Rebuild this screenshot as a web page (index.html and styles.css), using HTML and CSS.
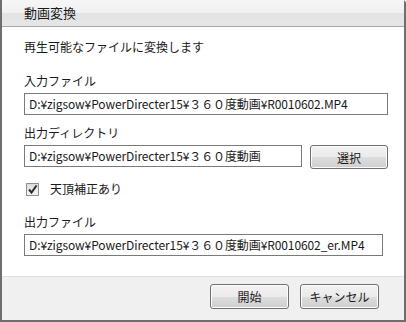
FILE: index.html
```html
<!DOCTYPE html>
<html lang="ja">
<head>
  <meta charset="UTF-8">
  <title>動画変換</title>
  <link rel="stylesheet" href="styles.css">
</head>
<body>
  <div class="dialog">
    <div class="titlebar">動画変換</div>

    <div class="content">
      <p class="lead">再生可能なファイルに変換します</p>

      <label class="field-label">入力ファイル</label>
      <div class="textbox wide">D:¥zigsow¥PowerDirecter15¥３６０度動画¥R0010602.MP4</div>

      <label class="field-label">出力ディレクトリ</label>
      <div class="row">
        <div class="textbox dir">D:¥zigsow¥PowerDirecter15¥３６０度動画</div>
        <button class="btn select">選択</button>
      </div>

      <div class="check">
        <span class="box">
          <svg width="11" height="11" viewBox="0 0 11 11">
            <path d="M2 5.5 L4.5 8.5 L9.5 1.5" fill="none" stroke="#2b2b2b" stroke-width="2"/>
          </svg>
        </span>
        <span>天頂補正あり</span>
      </div>

      <label class="field-label out">出力ファイル</label>
      <div class="textbox out-file">D:¥zigsow¥PowerDirecter15¥３６０度動画¥R0010602_er.MP4</div>
    </div>

    <div class="footer">
      <button class="btn">開始</button>
      <button class="btn">キャンセル</button>
    </div>
  </div>
</body>
</html>
```

FILE: styles.css
```css
body {
  margin: 0;
  width: 406px;
  height: 322px;
  overflow: hidden;
  font-family: "Noto Sans CJK JP", "Noto Sans", sans-serif;
  font-size: 12px;
  color: #1a1a1a;
  background: #ffffff;
}

.dialog {
  box-sizing: border-box;
  width: 406px;
  height: 322px;
  display: flex;
  flex-direction: column;
  border: 2px solid #6e6e6e;
  border-top: none;
  border-top-right-radius: 4px;
  background: #ffffff;
}

.titlebar {
  height: 26px;
  line-height: 26px;
  padding-left: 22px;
  font-size: 13px;
  background: linear-gradient(#f6f6f6, #f0f0f0 50%, #e3e3e3 51%, #e6e6e6);
  border-bottom: 1px solid #a9a9a9;
}

.content {
  flex: 1;
  padding: 11px 0 0 22px;
  display: flex;
  flex-direction: column;
}

.lead {
  margin: 0 0 16px;
  line-height: 18px;
}

.field-label {
  display: block;
  line-height: 18px;
  margin-bottom: 3px;
}

.field-label.out {
  margin-top: 15px;
}

.textbox {
  box-sizing: border-box;
  height: 22px;
  line-height: 20px;
  padding: 0 4px;
  border: 1px solid #7a7a7a;
  background: #ffffff;
  white-space: nowrap;
  overflow: hidden;
  letter-spacing: -0.1px;
}

.wide {
  width: 364px;
  margin-bottom: 9px;
}

.row {
  display: flex;
  gap: 8px;
  align-items: flex-start;
}

.dir {
  width: 278px;
}

.btn {
  box-sizing: border-box;
  height: 25px;
  font-family: inherit;
  font-size: 12px;
  color: #1a1a1a;
  border: 1px solid #707070;
  border-radius: 3px;
  background: linear-gradient(#f2f2f2, #ebebeb 50%, #dddddd 51%, #cfcfcf);
  box-shadow: inset 0 0 0 1px #fcfcfc;
  padding: 0;
}

.select {
  width: 78px;
  height: 24px;
}

.check {
  display: flex;
  align-items: center;
  gap: 11px;
  margin: 11px 0 0 2px;
  line-height: 18px;
}

.box {
  box-sizing: border-box;
  width: 13px;
  height: 13px;
  border: 1px solid #8e8f8f;
  background: linear-gradient(#dcdcdc, #f6f6f6);
  display: flex;
  align-items: center;
  justify-content: center;
}

.out-file {
  width: 359px;
}

.footer {
  height: 44px;
  box-sizing: border-box;
  border-top: 1px solid #dfdfdf;
  background: #f0f0f0;
  display: flex;
  justify-content: flex-end;
  gap: 11px;
  padding: 7px 25px 0 0;
}

.footer .btn {
  width: 79px;
}
```
